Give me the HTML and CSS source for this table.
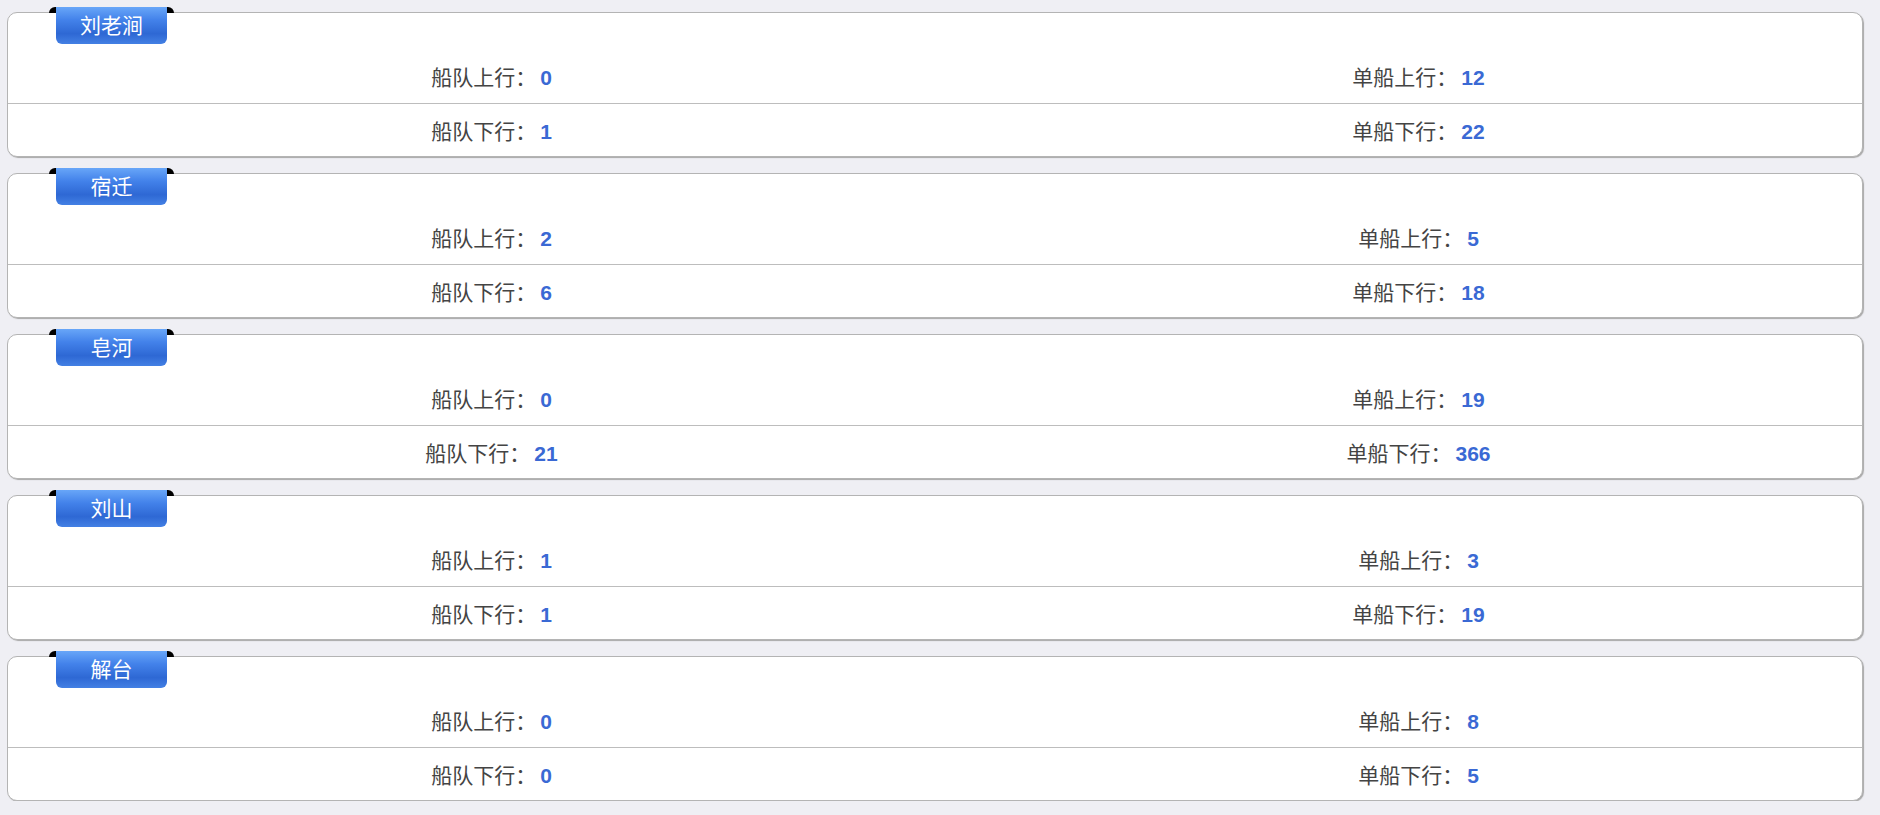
FILE: index.html
```html
<!DOCTYPE html>
<html lang="zh-CN">
<head>
<meta charset="utf-8">
<title>船闸统计</title>
<link rel="stylesheet" href="styles.css">
</head>
<body>
<div class="page">
  <section class="card">
    <div class="tag">刘老涧</div>
    <div class="head"></div>
    <div class="row">
      <div class="cell">船队上行：<b class="num">0</b></div>
      <div class="cell">单船上行：<b class="num">12</b></div>
    </div>
    <div class="row">
      <div class="cell">船队下行：<b class="num">1</b></div>
      <div class="cell">单船下行：<b class="num">22</b></div>
    </div>
  </section>
  <section class="card">
    <div class="tag">宿迁</div>
    <div class="head"></div>
    <div class="row">
      <div class="cell">船队上行：<b class="num">2</b></div>
      <div class="cell">单船上行：<b class="num">5</b></div>
    </div>
    <div class="row">
      <div class="cell">船队下行：<b class="num">6</b></div>
      <div class="cell">单船下行：<b class="num">18</b></div>
    </div>
  </section>
  <section class="card">
    <div class="tag">皂河</div>
    <div class="head"></div>
    <div class="row">
      <div class="cell">船队上行：<b class="num">0</b></div>
      <div class="cell">单船上行：<b class="num">19</b></div>
    </div>
    <div class="row">
      <div class="cell">船队下行：<b class="num">21</b></div>
      <div class="cell">单船下行：<b class="num">366</b></div>
    </div>
  </section>
  <section class="card">
    <div class="tag">刘山</div>
    <div class="head"></div>
    <div class="row">
      <div class="cell">船队上行：<b class="num">1</b></div>
      <div class="cell">单船上行：<b class="num">3</b></div>
    </div>
    <div class="row">
      <div class="cell">船队下行：<b class="num">1</b></div>
      <div class="cell">单船下行：<b class="num">19</b></div>
    </div>
  </section>
  <section class="card">
    <div class="tag">解台</div>
    <div class="head"></div>
    <div class="row">
      <div class="cell">船队上行：<b class="num">0</b></div>
      <div class="cell">单船上行：<b class="num">8</b></div>
    </div>
    <div class="row">
      <div class="cell">船队下行：<b class="num">0</b></div>
      <div class="cell">单船下行：<b class="num">5</b></div>
    </div>
  </section>
</div>
</body>
</html>
```

FILE: styles.css
```css
html, body {
  margin: 0;
  padding: 0;
  background: #efeff4;
}
body {
  font-family: "Liberation Sans", "Noto Sans CJK SC", sans-serif;
  color: #444;
}
.page {
  display: flex;
  flex-direction: column;
  gap: 16px;
  padding: 12px 17px 0 7px;
}
.card {
  position: relative;
  background: #fff;
  border: 1px solid #b4b4b4;
  border-radius: 10px;
  box-shadow: 1px 1px 1px #a8a8a8;
}
.tag {
  position: absolute;
  top: -6px;
  left: 48px;
  width: 111px;
  height: 37px;
  line-height: 35px;
  text-align: center;
  color: #fff;
  font-family: "Noto Sans CJK SC", sans-serif;
  font-size: 21px;
  border-radius: 0 0 6px 6px;
  background: linear-gradient(to bottom, #68a6f8 0%, #4382ea 35%, #2e68d4 72%, #4380e4 100%);
}
.tag::before,
.tag::after {
  content: "";
  position: absolute;
  top: 0;
  width: 7px;
  height: 6px;
  background: #000;
}
.tag::before {
  left: -7px;
  border-radius: 6px 0 0 0;
}
.tag::after {
  right: -7px;
  border-radius: 0 6px 0 0;
}
.head {
  height: 36px;
}
.row {
  display: flex;
  height: 54px;
  align-items: center;
}
.row + .row {
  height: 52px;
  border-top: 1px solid #bdbdbd;
}
.cell {
  flex: 1 1 0;
  padding-left: 40px;
  text-align: center;
  font-family: "Noto Sans CJK SC", sans-serif;
  font-size: 21px;
}
.num {
  font-family: "Liberation Sans", sans-serif;
  font-weight: bold;
  color: #3a69d4;
  margin-left: 4px;
}
```
